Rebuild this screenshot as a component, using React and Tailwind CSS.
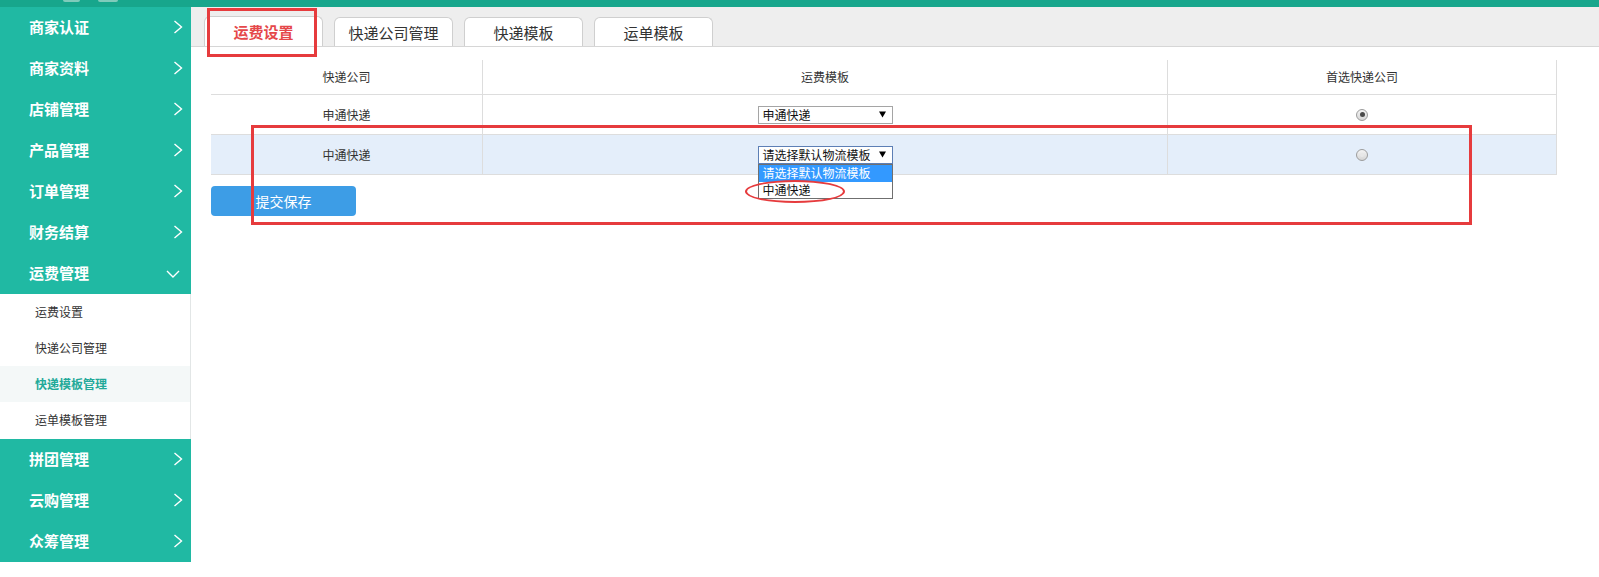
import React from "react";

const teal = "bg-[#20b9a3]";

function ChevRight() {
  return (
    <svg width="10" height="14" viewBox="0 0 10 14" className="mr-[8px] mb-[2px]">
      <polyline points="1.5,1 8.5,7 1.5,13" fill="none" stroke="#ffffff" strokeWidth="1.4" />
    </svg>
  );
}

function ChevDown() {
  return (
    <svg width="14" height="8" viewBox="0 0 14 8" className="mr-[11px]">
      <polyline points="1,1 7,7 13,1" fill="none" stroke="#ffffff" strokeWidth="1.4" />
    </svg>
  );
}

function MainItem({ label, open }) {
  return (
    <div className={`h-[41px] flex items-center justify-between pl-[29px] ${teal}`}>
      <span className="text-[15px] font-bold text-white leading-none mb-[3px]">{label}</span>
      {open ? <ChevDown /> : <ChevRight />}
    </div>
  );
}

function SubItem({ label, active }) {
  return (
    <div
      className={`h-[36px] flex items-center pl-[35px] text-[12px] leading-none ${
        active ? "bg-[#f4f8f8] text-[#22a999] font-bold" : "text-[#333333]"
      }`}
    >
      {label}
    </div>
  );
}

function Tab({ label, active }) {
  return (
    <div
      className={`w-[119px] ${active ? "h-[30px]" : "h-[29px]"} bg-white border border-b-0 border-[#cfcfcf] rounded-t-[6px] flex items-center justify-center text-[15px] leading-none ${
        active ? "text-[#e5484a] font-bold" : "text-[#333333]"
      }`}
    >
      {label}
    </div>
  );
}

function Radio({ checked }) {
  return (
    <div className="w-[12px] h-[12px] rounded-full border border-[#9c9c9c] bg-gradient-to-b from-[#f4f4f4] to-[#d6d6d6] flex items-center justify-center">
      {checked ? <div className="w-[5px] h-[5px] rounded-full bg-[#4a4a4a]" /> : <div className="w-[4px] h-[4px] rounded-full bg-[#e8e8e8]" />}
    </div>
  );
}

function Select({ value, focused, children }) {
  return (
    <div className="relative">
      <div
        className={`w-[135px] h-[18px] bg-white border ${
          focused ? "border-[#5d7fb5]" : "border-[#a5a5a5]"
        } flex items-center justify-between pl-[4px] pr-[6px] text-[12px] leading-none text-[#111111]`}
      >
        <span>{value}</span>
        <svg width="7" height="7" viewBox="0 0 7 7">
          <polygon points="0,0.5 7,0.5 3.5,6.5" fill="#000000" />
        </svg>
      </div>
      {children}
    </div>
  );
}

export default function App() {
  return (
    <div className="w-[1599px] h-[577px] bg-white relative overflow-hidden font-['Noto_Sans_CJK_SC','Noto_Sans',sans-serif]">
      {/* top bar */}
      <div className="h-[7px] bg-[#17a68c] flex items-start">
        <div className="ml-[63px] w-[17px] h-[2px] rounded-b-full bg-[#7fcbbb]" />
        <div className="ml-[18px] w-[20px] h-[2px] rounded-b-full bg-[#7fcbbb]" />
      </div>

      <div className="flex">
        {/* sidebar */}
        <aside className="w-[191px] flex flex-col">
          <MainItem label="商家认证" />
          <MainItem label="商家资料" />
          <MainItem label="店铺管理" />
          <MainItem label="产品管理" />
          <MainItem label="订单管理" />
          <MainItem label="财务结算" />
          <MainItem label="运费管理" open />
          <div className="bg-white border-r border-[#e2e6e6] pb-[1px]">
            <SubItem label="运费设置" />
            <SubItem label="快递公司管理" />
            <SubItem label="快递模板管理" active />
            <SubItem label="运单模板管理" />
          </div>
          <MainItem label="拼团管理" />
          <MainItem label="云购管理" />
          <MainItem label="众筹管理" />
        </aside>

        {/* content */}
        <main className="flex-1">
          <div className="h-[40px] bg-[#eeeeee] border-b border-[#d6d6d6] flex items-end pl-[13px] gap-[11px]">
            <Tab label="运费设置" active />
            <Tab label="快递公司管理" />
            <Tab label="快递模板" />
            <Tab label="运单模板" />
          </div>

          <div className="ml-[20px] mt-[13px] w-[1346px] text-[12px] text-[#333333]">
            <div className="grid grid-cols-[271px_685px_390px] h-[35px] border-b border-[#dddddd]">
              <div className="flex items-center justify-center">快递公司</div>
              <div className="flex items-center justify-center border-l border-[#dddddd]">运费模板</div>
              <div className="flex items-center justify-center border-l border-r border-[#dddddd]">首选快递公司</div>
            </div>
            <div className="grid grid-cols-[271px_685px_390px] h-[40px] border-b border-[#dddddd]">
              <div className="flex items-center justify-center">申通快递</div>
              <div className="flex items-center justify-center border-l border-[#dddddd]">
                <Select value="申通快递" />
              </div>
              <div className="flex items-center justify-center border-l border-r border-[#dddddd]">
                <Radio checked />
              </div>
            </div>
            <div className="grid grid-cols-[271px_685px_390px] h-[40px] border-b border-[#dddddd] bg-[#e4eefa]">
              <div className="flex items-center justify-center">中通快递</div>
              <div className="flex items-center justify-center border-l border-[#dddddd]">
                <Select value="请选择默认物流模板" focused>
                  <div className="absolute left-0 top-[18px] w-[135px] z-10 border border-[#6f6f6f] bg-white text-[12px] leading-none">
                    <div className="h-[17px] flex items-center pl-[4px] bg-[#3399ff] text-white">请选择默认物流模板</div>
                    <div className="h-[16px] flex items-center pl-[4px] text-[#111111]">中通快递</div>
                  </div>
                </Select>
              </div>
              <div className="flex items-center justify-center border-l border-r border-[#dddddd]">
                <Radio />
              </div>
            </div>
          </div>

          <button className="ml-[20px] mt-[11px] w-[145px] h-[30px] rounded-[4px] bg-[#3d9de6] text-white text-[14px] leading-none flex items-center justify-center">
            提交保存
          </button>
        </main>
      </div>

      {/* annotations */}
      <div className="absolute left-[207px] top-[8px] w-[110px] h-[49px] border-[3px] border-[#e63b3d] pointer-events-none" />
      <div className="absolute left-[251px] top-[125px] w-[1221px] h-[100px] border-[3px] border-[#e63b3d] pointer-events-none" />
      <div className="absolute left-[745px] top-[180px] w-[100px] h-[23px] border-2 border-[#e63b3d] rounded-[50%] pointer-events-none z-20" />
    </div>
  );
}
